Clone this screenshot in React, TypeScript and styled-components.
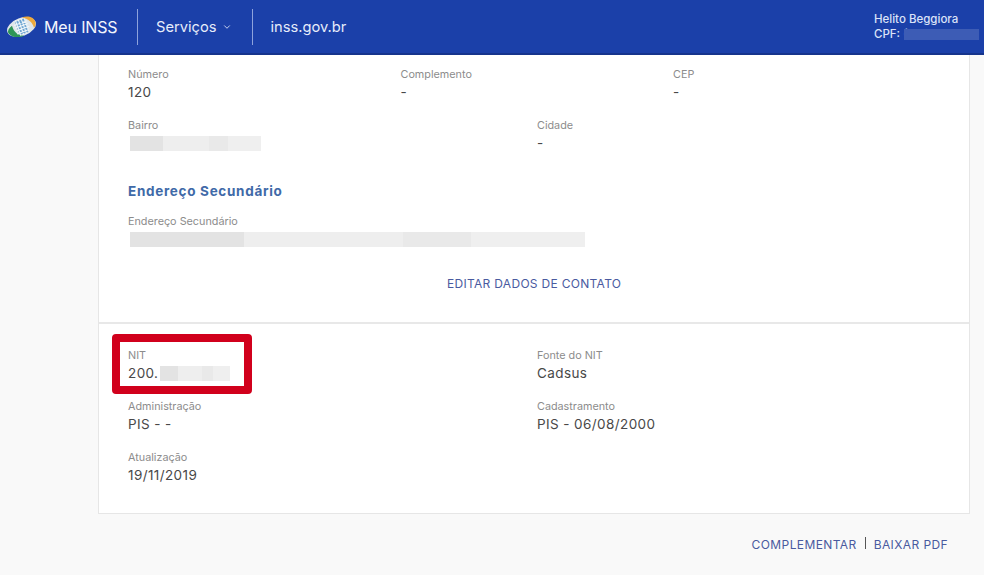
import styled, { createGlobalStyle } from "styled-components";
import { ChevronDown } from "lucide-react";

const GlobalStyle = createGlobalStyle`
  html, body {
    margin: 0;
    padding: 0;
    background: #f9f9f9;
    font-family: "Inter", "Liberation Sans", sans-serif;
  }
`;

function Logo() {
  return (
    <svg width="31" height="24" viewBox="0 0 31 24">
      <g transform="rotate(-20 15.500 12)">
        <ellipse cx="15.500" cy="12" rx="15" ry="9" fill="#dfe6ea" />
        <path d="M1 13C2.500 18.500 9 21.500 15 21C9.500 19 6.500 14.500 7 7.500C3.500 8.500 1 10.500 1 13Z" fill="#2e9557" />
        <path d="M19 3.200C25.500 3 30.300 7 30.300 11.500C30.300 14 29 16 27 17C27.500 11.500 24.500 6 19 3.200Z" fill="#eda93c" />
        <path d="M11 5H21V19H11Z" fill="#6fa6d2" />
        <path
          d="M9 8H23M9 11H23M9 14H23M9 17H21M12 4V20M15 4V20M18 4V20M21 5V19"
          stroke="#eef5f9"
          strokeWidth="1.100"
        />
      </g>
    </svg>
  );
}

function Field({ label, children }: { label: string; children: React.ReactNode }) {
  return (
    <FieldBox>
      <Label>{label}</Label>
      <Value>{children}</Value>
    </FieldBox>
  );
}

export default function App() {
  return (
    <>
      <GlobalStyle />
      <Header>
        <Brand>
          <Logo />
          <BrandName>Meu INSS</BrandName>
        </Brand>
        <HeaderLink $divided>
          Serviços <ChevronDown size={10} strokeWidth={2} />
        </HeaderLink>
        <HeaderLink>inss.gov.br</HeaderLink>
        <User>
          <div>Helito Beggiora</div>
          <CpfRow>
            CPF: (<CpfBlur />
          </CpfRow>
        </User>
      </Header>
      <Page>
        <Card>
          <TopSection>
            <ThreeColumns>
              <Field label="Número">120</Field>
              <Field label="Complemento">-</Field>
              <Field label="CEP">-</Field>
            </ThreeColumns>
            <TwoColumns>
              <Field label="Bairro">
                <Blur $width={131} />
              </Field>
              <Field label="Cidade">-</Field>
            </TwoColumns>
            <SectionTitle>Endereço Secundário</SectionTitle>
            <Field label="Endereço Secundário">
              <Blur $width={455} />
            </Field>
            <EditLink>EDITAR DADOS DE CONTATO</EditLink>
          </TopSection>
          <BottomSection>
            <TwoColumns>
              <Marked>
                <Field label="NIT">
                  200.
                  <Blur $width={70} />
                </Field>
              </Marked>
              <Field label="Fonte do NIT">Cadsus</Field>
              <Field label="Administração">PIS - -</Field>
              <Field label="Cadastramento">PIS - 06/08/2000</Field>
              <Field label="Atualização">19/11/2019</Field>
            </TwoColumns>
          </BottomSection>
        </Card>
        <Actions>
          <ActionLink>COMPLEMENTAR</ActionLink>
          <ActionDivider />
          <ActionLink>BAIXAR PDF</ActionLink>
        </Actions>
      </Page>
    </>
  );
}

const Header = styled.header`
  display: flex;
  align-items: center;
  height: 53px;
  padding-left: 6px;
  background: #1b40a9;
  border-bottom: 2px solid #16348c;
  color: #e6ecfa;
`;

const Brand = styled.div`
  display: flex;
  align-items: center;
  gap: 7px;
  width: 131px;
  height: 36px;
  border-right: 1px solid #8ea3dc;
  flex-shrink: 0;
`;

const BrandName = styled.span`
  color: #f4f6fd;
  font-size: 16px;
  letter-spacing: -0.15px;
`;

const HeaderLink = styled.a<{ $divided?: boolean }>`
  display: flex;
  align-items: center;
  gap: 5px;
  height: 36px;
  margin-left: 18px;
  padding-right: ${(p) => (p.$divided ? "20px" : "0")};
  border-right: ${(p) => (p.$divided ? "1px solid #8ea3dc" : "none")};
  font-size: 14.7px;
  color: #e6ecfa;
`;

const User = styled.div`
  margin-left: auto;
  width: 110px;
  font-size: 11.5px;
  font-weight: 500;
  line-height: 15px;
  color: #dbe3f8;
`;

const CpfRow = styled.div`
  display: flex;
  align-items: center;
  white-space: pre;
`;

const CpfBlur = styled.span`
  width: 75px;
  height: 11px;
  margin-left: -3px;
  background: #3d5cb5;
`;

const Page = styled.main`
  padding-left: 98px;
  padding-right: 14px;
`;

const Card = styled.section`
  background: #fff;
  border: 1px solid #e6e6e6;
  border-top: none;
`;

const TopSection = styled.div`
  padding: 12px 29px 0;
  height: 269px;
  box-sizing: border-box;
  border-bottom: 2px solid #e8e8e8;
`;

const BottomSection = styled.div`
  padding: 24px 29px 0;
  height: 189px;
  box-sizing: border-box;
`;

const ThreeColumns = styled.div`
  display: grid;
  grid-template-columns: repeat(3, 272.5px);
`;

const TwoColumns = styled.div`
  display: grid;
  grid-template-columns: repeat(2, 409px);
`;

const FieldBox = styled.div`
  height: 51px;
`;

const Label = styled.div`
  height: 15px;
  font-size: 10.8px;
  line-height: 15px;
  color: #8c8c8c;
`;

const Value = styled.div`
  display: flex;
  align-items: center;
  height: 21px;
  font-size: 13.5px;
  line-height: 21px;
  letter-spacing: 0.4px;
  color: #484848;
`;

const Blur = styled.span<{ $width: number }>`
  display: block;
  width: ${(p) => p.$width}px;
  height: 15px;
  margin-left: 2px;
  background: linear-gradient(
    90deg,
    #e3e3e3 0 25%,
    #eeeeee 25% 60%,
    #e9e9e9 60% 75%,
    #efefef 75% 100%
  );
`;

const SectionTitle = styled.h2`
  margin: 13px 0 14px;
  font-size: 13.5px;
  line-height: 18px;
  font-weight: 700;
  letter-spacing: 0.7px;
  color: #3f6aa8;
`;

const EditLink = styled.a`
  display: block;
  margin-top: 10px;
  margin-left: 319px;
  font-size: 12px;
  line-height: 18px;
  letter-spacing: 0.3px;
  color: #4a5a9f;
`;

const Marked = styled.div`
  position: relative;
  &::after {
    content: "";
    position: absolute;
    left: -16px;
    top: -14px;
    width: 124px;
    height: 44px;
    border: 8px solid #d1001c;
    border-radius: 4px;
  }
`;

const Actions = styled.div`
  display: flex;
  justify-content: flex-end;
  align-items: center;
  gap: 8px;
  margin-top: 23px;
  padding-right: 22px;
`;

const ActionLink = styled.a`
  font-size: 12px;
  line-height: 16px;
  letter-spacing: 0.4px;
  color: #4a5a9f;
`;

const ActionDivider = styled.span`
  width: 1px;
  height: 12px;
  background: #555;
  margin-top: -4px;
`;
